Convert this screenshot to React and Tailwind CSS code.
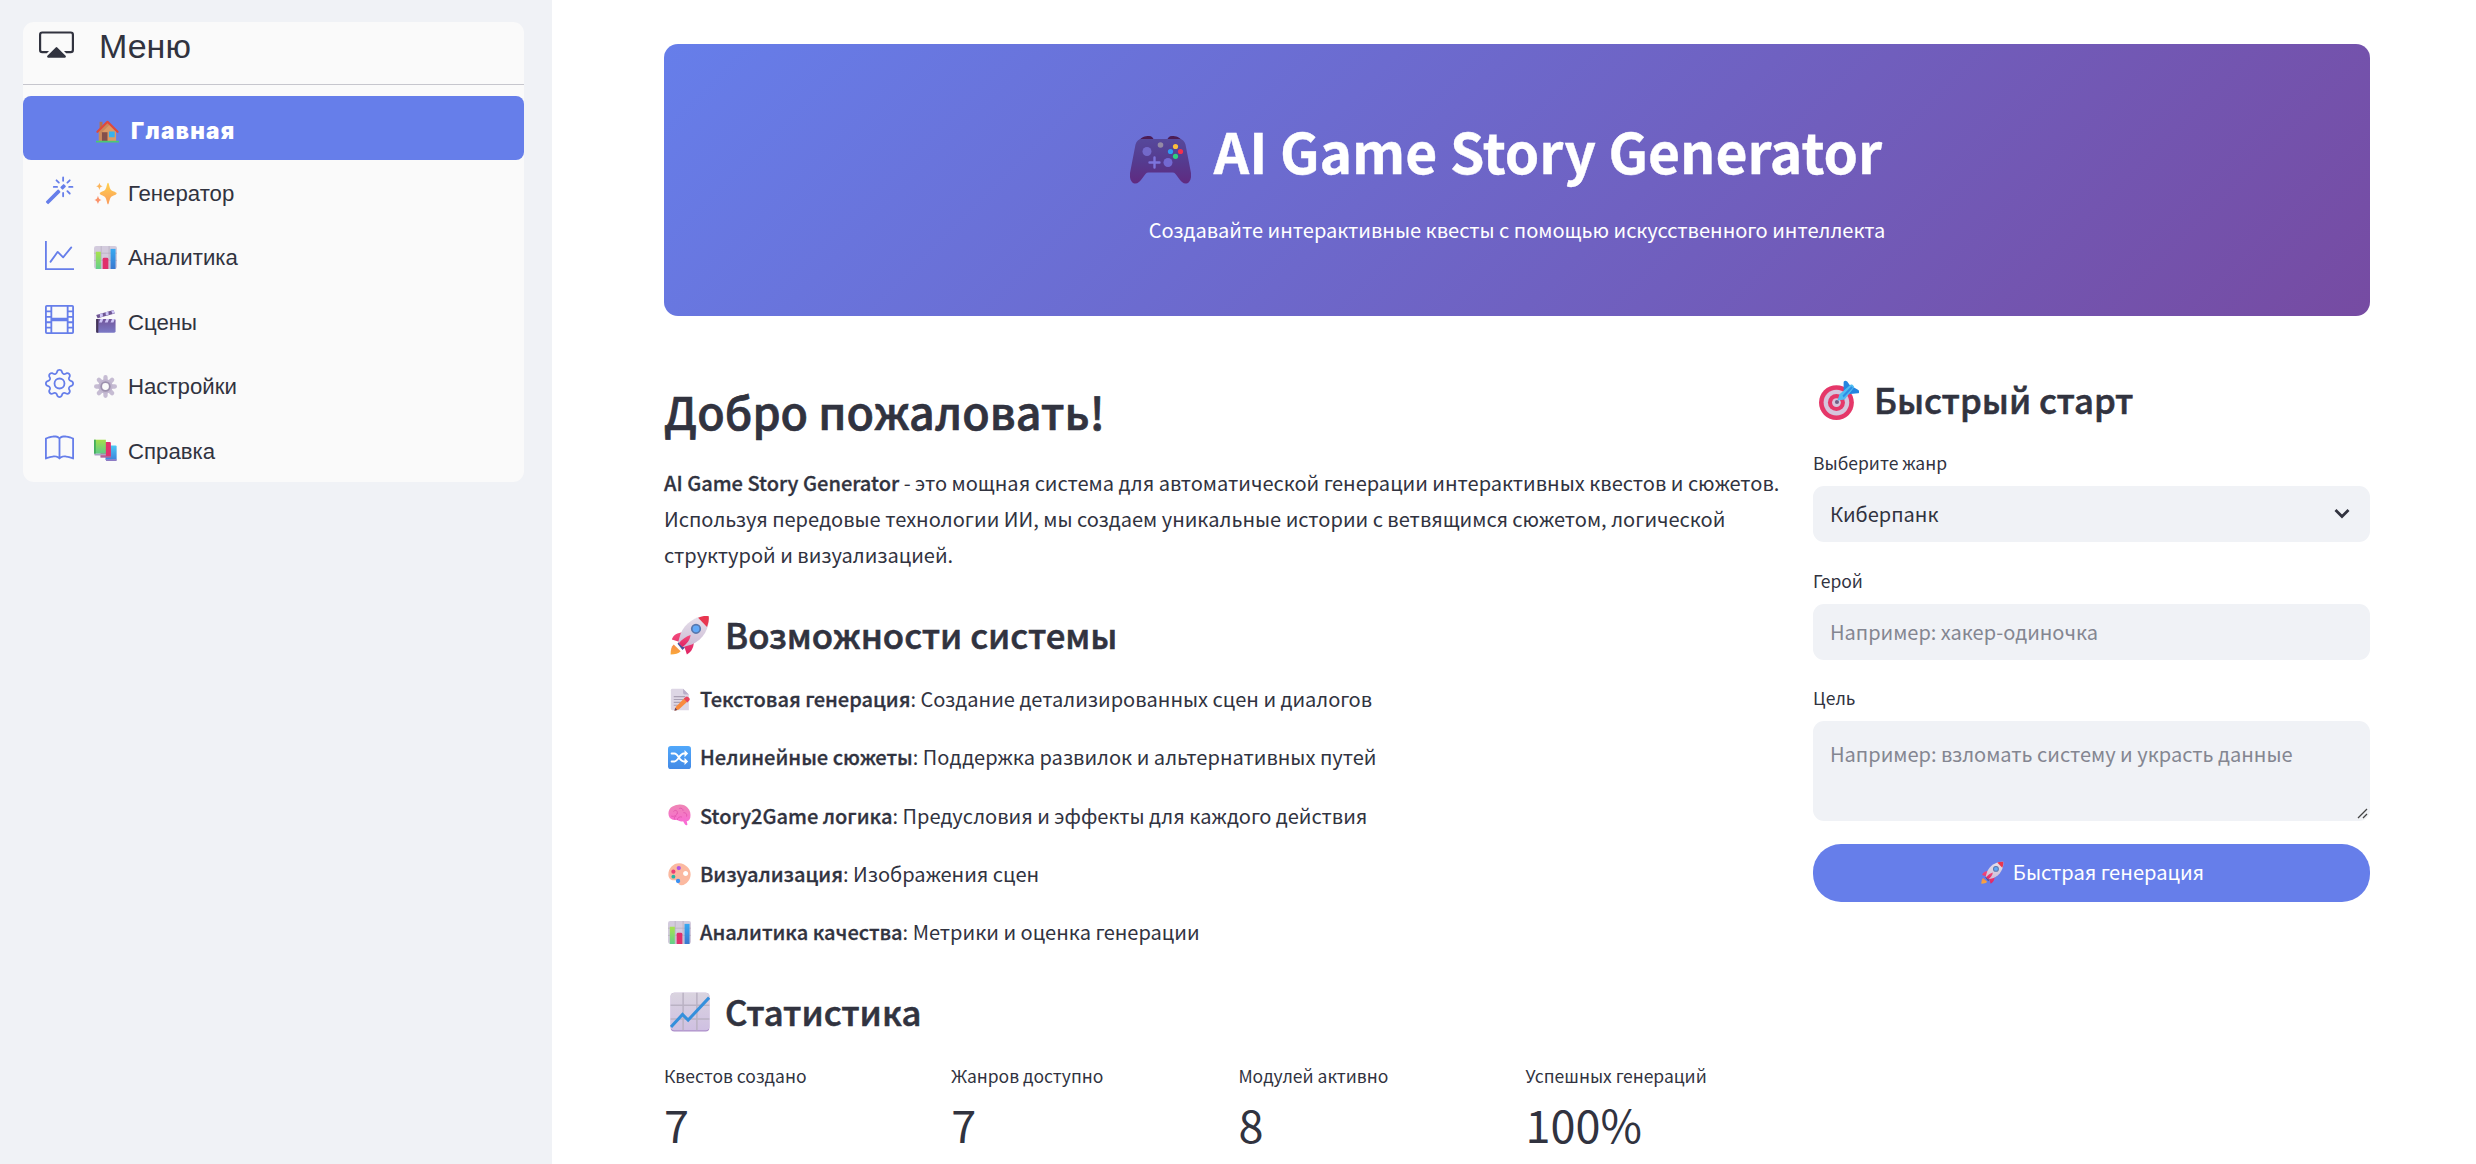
import { BsBook, BsCast, BsFilm, BsGear, BsGraphUp, BsMagic } from "react-icons/bs";

const box = { viewBox: "0 0 32 32", fill: "none" };

function Gradient({ id, from, to, diagonal }) {
  return (
    <linearGradient id={id} x1={diagonal ? "1" : "0"} y1="0" x2="0" y2="1">
      <stop stopColor={from} />
      <stop offset="1" stopColor={to} />
    </linearGradient>
  );
}

function House({ className }) {
  return (
    <svg {...box} className={className}>
      <path d="M5 2.500h4V12H5z" fill="#b5734f" />
      <path d="M4 14 16 4l12 10v16H4z" fill="#dc9a66" />
      <path d="M4 14 16 4l3 2.500L7 18v12H4z" fill="#c98a5c" />
      <path d="M2 16.500 16 2.500l14 14" stroke="#e04a3c" strokeWidth="3" strokeLinecap="round" strokeLinejoin="round" />
      <path d="M8 17h8v13H8z" fill="#84504c" />
      <path d="M18 16h8v8h-8z" fill="#35b2ef" />
      <path d="M1 30h30" stroke="#4cc873" strokeWidth="2.600" strokeLinecap="round" />
    </svg>
  );
}

function Sparkles({ className }) {
  return (
    <svg {...box} className={className}>
      <defs>
        <Gradient id="spark" from="#ffd24f" to="#fb9a5a" />
      </defs>
      <path d="M19.500 1c1.500 0 1.500 6 3.700 9.500C25 13.500 31.500 13.500 31.500 16s-6.500 2.500-8.300 5.500C21 25 21 31 19.500 31s-1.500-6-3.700-9.500C14 18.500 8 18.500 8 16s6-2.500 7.800-5.500C18 7 18 1 19.500 1" fill="url(#spark)" />
      <path d="M7.500 1c1 3.500 1.500 4 4.500 5-3 1-3.500 1.500-4.500 5-1-3.500-1.500-4-4.500-5 3-1 3.500-1.500 4.500-5" fill="#fbb45b" />
      <path d="M5.500 19c1 4 2 5 5 6-3 1-4 2-5 5.500-1-3.500-2-4.500-5-5.500 3-1 4-2 5-6" fill="#fb936b" />
    </svg>
  );
}

function Bars({ className }) {
  return (
    <svg {...box} className={className}>
      <defs>
        <Gradient id="barGreen" from="#a8e34d" to="#63cf8c" />
        <Gradient id="barBlue" from="#36a9f2" to="#3a78cf" />
      </defs>
      <rect x="0" y="0" width="32" height="32" rx="3" fill="#d3cbdd" />
      <path d="M0 10h32M0 20h32M10 0v32M21 0v32" stroke="#b5aebd" />
      <path d="M2.500 8h7v24h-7z" fill="url(#barGreen)" />
      <path d="M12 32V18.500a2 2 0 0 1 2-2h4a2 2 0 0 1 2 2V32z" fill="#e02f6b" />
      <path d="M23 4h7v28h-7z" fill="url(#barBlue)" />
    </svg>
  );
}

function Clapper({ className }) {
  return (
    <svg {...box} className={className}>
      <defs>
        <Gradient id="slate" from="#71559a" to="#7b79c6" />
      </defs>
      <path d="M3 7 27 0l2 5L5 11.500z" fill="#6f5694" />
      <path d="m8 5.600 4-1.200.5 4.600-4 1.200zM16 3.200l4-1.100.5 4.600-4 1.100zM24 1l3-1 2 4.500-3.500.8z" fill="#cfc6f7" />
      <rect x="3" y="12.500" width="27" height="19" rx="2" fill="url(#slate)" />
      <path d="M3 12.500h3v19H4a1 1 0 0 1-1-1z" fill="#443557" />
      <path d="m9 12.500-2 5h4l2-5zm8 0-2 5h4l2-5zm8 0-2 5h4l2-5z" fill="#cfc6f7" />
    </svg>
  );
}

function Cog({ className }) {
  return (
    <svg {...box} className={className}>
      <path d="M6.800 6.800l18.400 18.400M25.200 6.800 6.800 25.200M16 3v26M3 16h26" stroke="#c6bcd3" strokeWidth="6" strokeLinecap="round" />
      <circle cx="16" cy="16" r="8.500" fill="#c4bad2" stroke="#c0b5ce" strokeWidth="3" />
      <circle cx="16" cy="16" r="6" fill="#fafafa" stroke="#9c90ad" strokeWidth="2.500" />
    </svg>
  );
}

function Books({ className }) {
  return (
    <svg {...box} className={className}>
      <defs>
        <Gradient id="bookGreen" from="#a5de4b" to="#5ecb88" />
        <Gradient id="bookBlue" from="#4bc8f5" to="#3e84dc" />
      </defs>
      <path d="M16 9h14a1.500 1.500 0 0 1 1.500 1.500V29H16z" fill="url(#bookBlue)" />
      <path d="M16 28h15.500v2.500H17z" fill="#8d7bc4" />
      <path d="M9 4h13a1.500 1.500 0 0 1 1.500 1.500V24H9z" fill="#e3316c" />
      <path d="M9 23.500h14.500V26H9z" fill="#b0629c" />
      <path d="M0 1h16.500v19.500H0z" fill="url(#bookGreen)" />
      <path d="M0 1h2.500v19.500H0z" fill="#43ad5c" />
      <path d="M0 20.500h16.500V23H1z" fill="#a9a4c3" />
    </svg>
  );
}

function Gamepad({ className }) {
  return (
    <svg viewBox="0 0 61 48" fill="none" className={className}>
      <defs>
        <linearGradient id="pad" x1="0" y1="0" x2="0" y2="1">
          <stop stopColor="#56489b" />
          <stop offset=".5" stopColor="#553b8f" />
          <stop offset="1" stopColor="#602a80" />
        </linearGradient>
      </defs>
      <path d="M9 5c2-4 6-5 10-5 3 0 4 2 5 4zM52 5c-2-4-6-5-10-5-3 0-4 2-5 4z" fill="#4c1c55" />
      <path d="M12 3h37c3.500 0 5.500 2 6.500 5.500L61 37c.7 6-1.500 10-4.500 10.500-3 .5-5.500-2-8-5.500-2.500-3.500-3.500-5.500-6-5.500h-24c-2.500 0-3.500 2-6 5.500-2.500 3.500-5 6-8 5.500C1.500 47-.7 43 0 37L5.500 8.500C6.500 5 8.500 3 12 3" fill="url(#pad)" />
      <circle cx="17" cy="15.500" r="4.500" fill="#7369ca" />
      <circle cx="38" cy="26.500" r="4.500" fill="#7369d2" />
      <path d="M24.500 21.500v10M19.500 26.500h10" stroke="#7d74dc" strokeWidth="2.400" strokeLinecap="round" />
      <circle cx="30.500" cy="9" r="2.800" fill="#948aa5" />
      <circle cx="45.500" cy="10.500" r="2.600" fill="#fbbd3c" />
      <circle cx="40.500" cy="15.500" r="2.600" fill="#2f9cf3" />
      <circle cx="50.500" cy="15.500" r="2.600" fill="#f42f4c" />
      <circle cx="45.500" cy="20.300" r="2.600" fill="#2ed27f" />
    </svg>
  );
}

function Rocket({ className }) {
  return (
    <svg {...box} className={className}>
      <defs>
        <Gradient id="hull" from="#e6e0ea" to="#cdbcd6" />
        <Gradient id="fin" from="#f24b7d" to="#e02463" />
        <Gradient id="flame" from="#f58a4a" to="#fba83a" />
      </defs>
      <path d="M3 23.500 8.500 29c-1.500 2-4.500 2.500-8 2.500 0-3.500.5-6.500 2.500-8" fill="url(#flame)" />
      <path d="m6 23 4 5 2-2-4.500-5z" fill="#46539c" />
      <path d="M12 14c-5-.5-9.500 1.500-10.500 5.500L9 22zM19 20c.5 5-1.500 9.500-5.500 11.500L11 24z" fill="url(#fin)" />
      <path d="M31 1C22 0 12 6 8.500 15l-2 6.500 4 4 7-2C26.500 20 32 10 31 1" fill="url(#hull)" />
      <path d="M31 1c-3.500-.4-5.700.2-8.500 1.200L29.600 9.500C30.800 6.500 31.300 3.500 31 1" fill="#e8364f" />
      <path d="M16.500 16c-3.500 1-7 3.500-9.500 6.500l3 3c3.500-2.500 6-5.500 6.500-9.500" fill="url(#fin)" />
      <circle cx="20.800" cy="11" r="3.400" fill="#62a9f7" stroke="#5878ad" strokeWidth="1.400" />
    </svg>
  );
}

function Memo({ className }) {
  return (
    <svg {...box} className={className}>
      <path d="M6 1h15l8 8v22H6a2 2 0 0 1-2-2V3a2 2 0 0 1 2-2" fill="#ddd6e5" />
      <path d="m21 1 8 8h-6a2 2 0 0 1-2-2z" fill="#b9aec9" />
      <path d="M8 12h16M8 16h14M8 20h10M8 24h6" stroke="#aaa1b5" strokeWidth="1.500" />
      <path d="m11 26 12-12 4.500 4.500L15 30l-6 1.500z" fill="#f98a3e" />
      <path d="m22 15 2.500-2.500c1-1 2.500-1 3.500 0l1.500 1.500c1 1 1 2.500 0 3.500L27 20z" fill="#e84560" />
      <path d="m10 27.500-1 4 4-1z" fill="#66435b" />
    </svg>
  );
}

function Shuffle({ className }) {
  return (
    <svg {...box} className={className}>
      <defs>
        <Gradient id="tile" from="#51a8fb" to="#438ae6" />
      </defs>
      <rect width="32" height="32" rx="4" fill="url(#tile)" />
      <path d="M5 10.500h4c5 0 7 11 13 11h3M5 21.500h4c5 0 7-11 13-11h3" stroke="#fff" strokeWidth="2.600" strokeLinecap="round" />
      <path d="m23 5.500 5 5-5 5zM23 16.500l5 5-5 5z" fill="#fff" />
    </svg>
  );
}

function Brain({ className }) {
  return (
    <svg {...box} className={className}>
      <defs>
        <Gradient id="brain" from="#ee86b4" to="#fb68d8" />
      </defs>
      <path d="M14 1c5-1 10 .5 13 4 4 4 5 9 4 14-1 3-2.500 4.500-5 5l1 4c0 2-3 2-4-.5L21 24c-3 1-6 0-8-2-6 1-11-1-12-6C0 12 1 8 4 5c3-2.500 6-3.500 10-4" fill="url(#brain)" />
      <path d="M8 10c3-3 6 0 5 3M16 6c3-1 5 1 5 3M5 17c4 1 7-1 8-4M13 22c0-3 3-5 6-4M22 12c3 0 5 2 4 5M9 21c-1-2 0-4 2-4" stroke="#e255ae" strokeWidth="1.200" strokeLinecap="round" />
    </svg>
  );
}

function Palette({ className }) {
  return (
    <svg {...box} className={className}>
      <path d="M16 .5C8 0 .5 7 .5 16c0 6 4.500 8.500 8 8s5.500.5 5.500 2.500c0 2.500 2 5 5 4.500C26 30 31.500 23 31.500 15.500 31.500 8 24 1 16 .5m8.500 17.500c-2 0-3.500-1.500-3.500-3.500s1.500-3.500 3.500-3.500S28 12.500 28 14.500 26.500 18 24.500 18" fill="#fbb9a0" fillRule="evenodd" />
      <circle cx="15" cy="7" r="3" fill="#ad56e4" />
      <circle cx="7.500" cy="12" r="2.900" fill="#ee3f75" />
      <circle cx="7.500" cy="19" r="2.700" fill="#27b5a6" />
      <circle cx="14" cy="25" r="3" fill="#3b91f1" />
    </svg>
  );
}

function Trend({ className }) {
  return (
    <svg {...box} className={className}>
      <defs>
        <Gradient id="sheet" from="#dad4df" to="#cfc0e2" />
      </defs>
      <rect x=".5" y=".5" width="31" height="31" rx="3" fill="#ad8fca" />
      <rect x=".5" y=".5" width="31" height="30" rx="3" fill="url(#sheet)" />
      <path d="M.5 10.500h31M.5 21.500h31M10.500.5v30M21.500.5v30" stroke="#bab2c3" strokeWidth="1.200" />
      <path d="M.8 28 10 18l4.500 4.500L31.300 4.500" stroke="#3590dc" strokeWidth="2.400" />
    </svg>
  );
}

function Target({ className }) {
  return (
    <svg viewBox="0 0 39 39" fill="none" className={className}>
      <circle cx="17" cy="22" r="17" fill="#e53769" />
      <circle cx="17" cy="22" r="12.500" fill="#d5c5dd" />
      <circle cx="17" cy="22" r="8.300" fill="#e53769" />
      <circle cx="17" cy="22" r="4.300" fill="#d5c5dd" />
      <circle cx="17.500" cy="21.500" r="2" fill="#6f5f86" />
      <path d="M24 10V2.500C24 .5 26 0 27.500 1.500l4 5.500-5 7zM28 14l10-1c1.800-.5 1.500-2.500 0-3.500L32 6z" fill="#2585e0" />
      <path d="m18 20 2-6 11-9.500c1-1 4 1.500 3 3L25 19z" fill="#50bdf2" />
      <path d="m23 15 8.500-9 1.600 1.600L24 17z" fill="#2e8ee6" />
    </svg>
  );
}

const menu = [
  { label: "Генератор", Icon: BsMagic, Emoji: Sparkles },
  { label: "Аналитика", Icon: BsGraphUp, Emoji: Bars },
  { label: "Сцены", Icon: BsFilm, Emoji: Clapper },
  { label: "Настройки", Icon: BsGear, Emoji: Cog },
  { label: "Справка", Icon: BsBook, Emoji: Books },
];

const features = [
  { Emoji: Memo, name: "Текстовая генерация", text: "Создание детализированных сцен и диалогов" },
  { Emoji: Shuffle, name: "Нелинейные сюжеты", text: "Поддержка развилок и альтернативных путей" },
  { Emoji: Brain, name: "Story2Game логика", text: "Предусловия и эффекты для каждого действия" },
  { Emoji: Palette, name: "Визуализация", text: "Изображения сцен" },
  { Emoji: Bars, name: "Аналитика качества", text: "Метрики и оценка генерации" },
];

const stats = [
  ["Квестов создано", "7"],
  ["Жанров доступно", "7"],
  ["Модулей активно", "8"],
  ["Успешных генераций", "100%"],
];

function Sidebar() {
  return (
    <aside className="w-[552px] shrink-0 bg-[#f0f2f6] pl-[23px] pr-7 pt-[22px] font-['Liberation_Sans',sans-serif]">
      <nav className="h-[460px] rounded-[11px] bg-[#fafafa]">
        <div className="flex h-[63px] border-b border-[#c6c6cd] pl-4">
          <BsCast className="mt-[5px] size-[35px]" />
          <span className="ml-[25px] text-[34px] leading-[48px]">Меню</span>
        </div>
        <div className="mt-[11px] flex h-16 items-center rounded-lg bg-[#667eea] pl-[73px] text-white">
          <House className="mt-[6px] size-[23px]" />
          <span className="ml-3 mt-[6px] font-['Inter',sans-serif] text-[22.500px] font-black tracking-[1.300px]">Главная</span>
        </div>
        {menu.map(({ label, Icon, Emoji }) => (
          <div key={label} className="flex h-[64.400px] items-center pl-[22px]">
            <Icon className="mb-[3px] size-[29px] text-[#667eea]" />
            <Emoji className="ml-[20px] mt-[2px] size-[23px]" />
            <span className="ml-[11px] mt-[3px] text-[22.200px]">{label}</span>
          </div>
        ))}
      </nav>
    </aside>
  );
}

function Hero() {
  return (
    <header className="flex h-[272px] flex-col items-center rounded-[14px] bg-[linear-gradient(135deg,#667eea_0%,#764ba2_100%)] pt-[73px] text-white">
      <h1 className="flex pr-[22px] text-[55.200px] font-bold leading-[66px]">
        <Gamepad className="mr-[23px] mt-[19px] h-12 w-[61px]" />
        <span className="[-webkit-text-stroke:0.4px_white]">AI Game Story Generator</span>
      </h1>
      <p className="mt-7 text-[20.040px] leading-9">Создавайте интерактивные квесты с помощью искусственного интеллекта</p>
    </header>
  );
}

function Heading({ Emoji, children }) {
  return (
    <h2 className="flex h-[42px] items-start pl-[6px] text-[34.700px] font-medium leading-[42px]">
      <Emoji className="mr-[15px] mt-[2px] size-10" />
      <span className="[-webkit-text-stroke:0.6px_#31333f]">{children}</span>
    </h2>
  );
}

function QuickStart() {
  return (
    <section className="w-[557px] pt-[62px]">
      <Heading Emoji={Target}>Быстрый старт</Heading>
      <label className="mt-[29px] block text-[17.500px] leading-7">Выберите жанр</label>
      <div className="mt-[9px] flex h-14 items-center justify-between rounded-[11px] bg-[#f0f2f6] pl-[17px] pr-[20px]">
        <span className="pb-[1px] text-[20px]">Киберпанк</span>
        <svg viewBox="0 0 16 10" fill="none" className="h-[10px] w-4">
          <path d="m1.500 1 6.500 6.500L14.500 1" stroke="#31333f" strokeWidth="2.800" />
        </svg>
      </div>
      <label className="mt-[25px] block text-[17.500px] leading-7">Герой</label>
      <div className="mt-[9px] flex h-14 items-center rounded-[11px] bg-[#f0f2f6] pb-[1px] pl-[17px] text-[20px] text-[#848691]">Например: хакер-одиночка</div>
      <label className="mt-6 block text-[17.500px] leading-7">Цель</label>
      <div className="mt-[9px] flex h-[100px] justify-between rounded-[11px] bg-[#f0f2f6] pl-[17px] pt-[15px] text-[20.040px] leading-9 text-[#848691]">
        Например: взломать систему и украсть данные
        <svg viewBox="0 0 11 11" fill="none" className="mb-[2px] mr-[2px] size-[11px] self-end">
          <path d="m1 10 9-9M6 10l4-4" stroke="#444" strokeWidth="1.300" />
        </svg>
      </div>
      <button className="mt-[23px] flex h-[58px] w-full items-center justify-center rounded-[28px] bg-[#667eea] pb-[1px] pl-[2px] text-[20.100px] text-white">
        <Rocket className="mr-[9px] size-[23px]" />
        Быстрая генерация
      </button>
    </section>
  );
}

export default function App() {
  return (
    <div className="flex h-[1164px] w-[2476px] overflow-hidden bg-white font-['Noto_Sans_CJK_SC',sans-serif] text-[#31333f]">
      <Sidebar />
      <main className="ml-28 w-[1706px] pt-11">
        <Hero />
        <div className="flex justify-between">
          <section className="w-[1125px] pt-[68px]">
            <h2 className="text-[44.800px] font-medium leading-[54px] [-webkit-text-stroke:0.7px_#31333f]">Добро пожаловать!</h2>
            <p className="mt-[27px] text-[20.040px] leading-9">
              <strong className="font-medium [-webkit-text-stroke:0.3px_#31333f]">AI Game Story Generator</strong> - это мощная система для автоматической генерации интерактивных квестов и сюжетов.
              <br />
              Используя передовые технологии ИИ, мы создаем уникальные истории с ветвящимся сюжетом, логической
              <br />
              структурой и визуализацией.
            </p>
            <div className="mt-10">
              <Heading Emoji={Rocket}>Возможности системы</Heading>
            </div>
            <ul className="mt-[15px]">
              {features.map(({ Emoji, name, text }) => (
                <li key={name} className="flex h-[58.300px] items-center pl-1 text-[20.040px]">
                  <Emoji className="mr-[9px] size-[23px]" />
                  <span>
                    <strong className="font-medium [-webkit-text-stroke:0.3px_#31333f]">{name}</strong>: {text}
                  </span>
                </li>
              ))}
            </ul>
            <div className="mt-[29px]">
              <Heading Emoji={Trend}>Статистика</Heading>
            </div>
            <div className="mt-[30px] grid grid-cols-[repeat(4,287.200px)]">
              {stats.map(([label, value]) => (
                <div key={label}>
                  <div className="text-[17.500px] leading-7">{label}</div>
                  <div className="mt-1 text-[45px] leading-[60px]">{value}</div>
                </div>
              ))}
            </div>
          </section>
          <QuickStart />
        </div>
      </main>
    </div>
  );
}
